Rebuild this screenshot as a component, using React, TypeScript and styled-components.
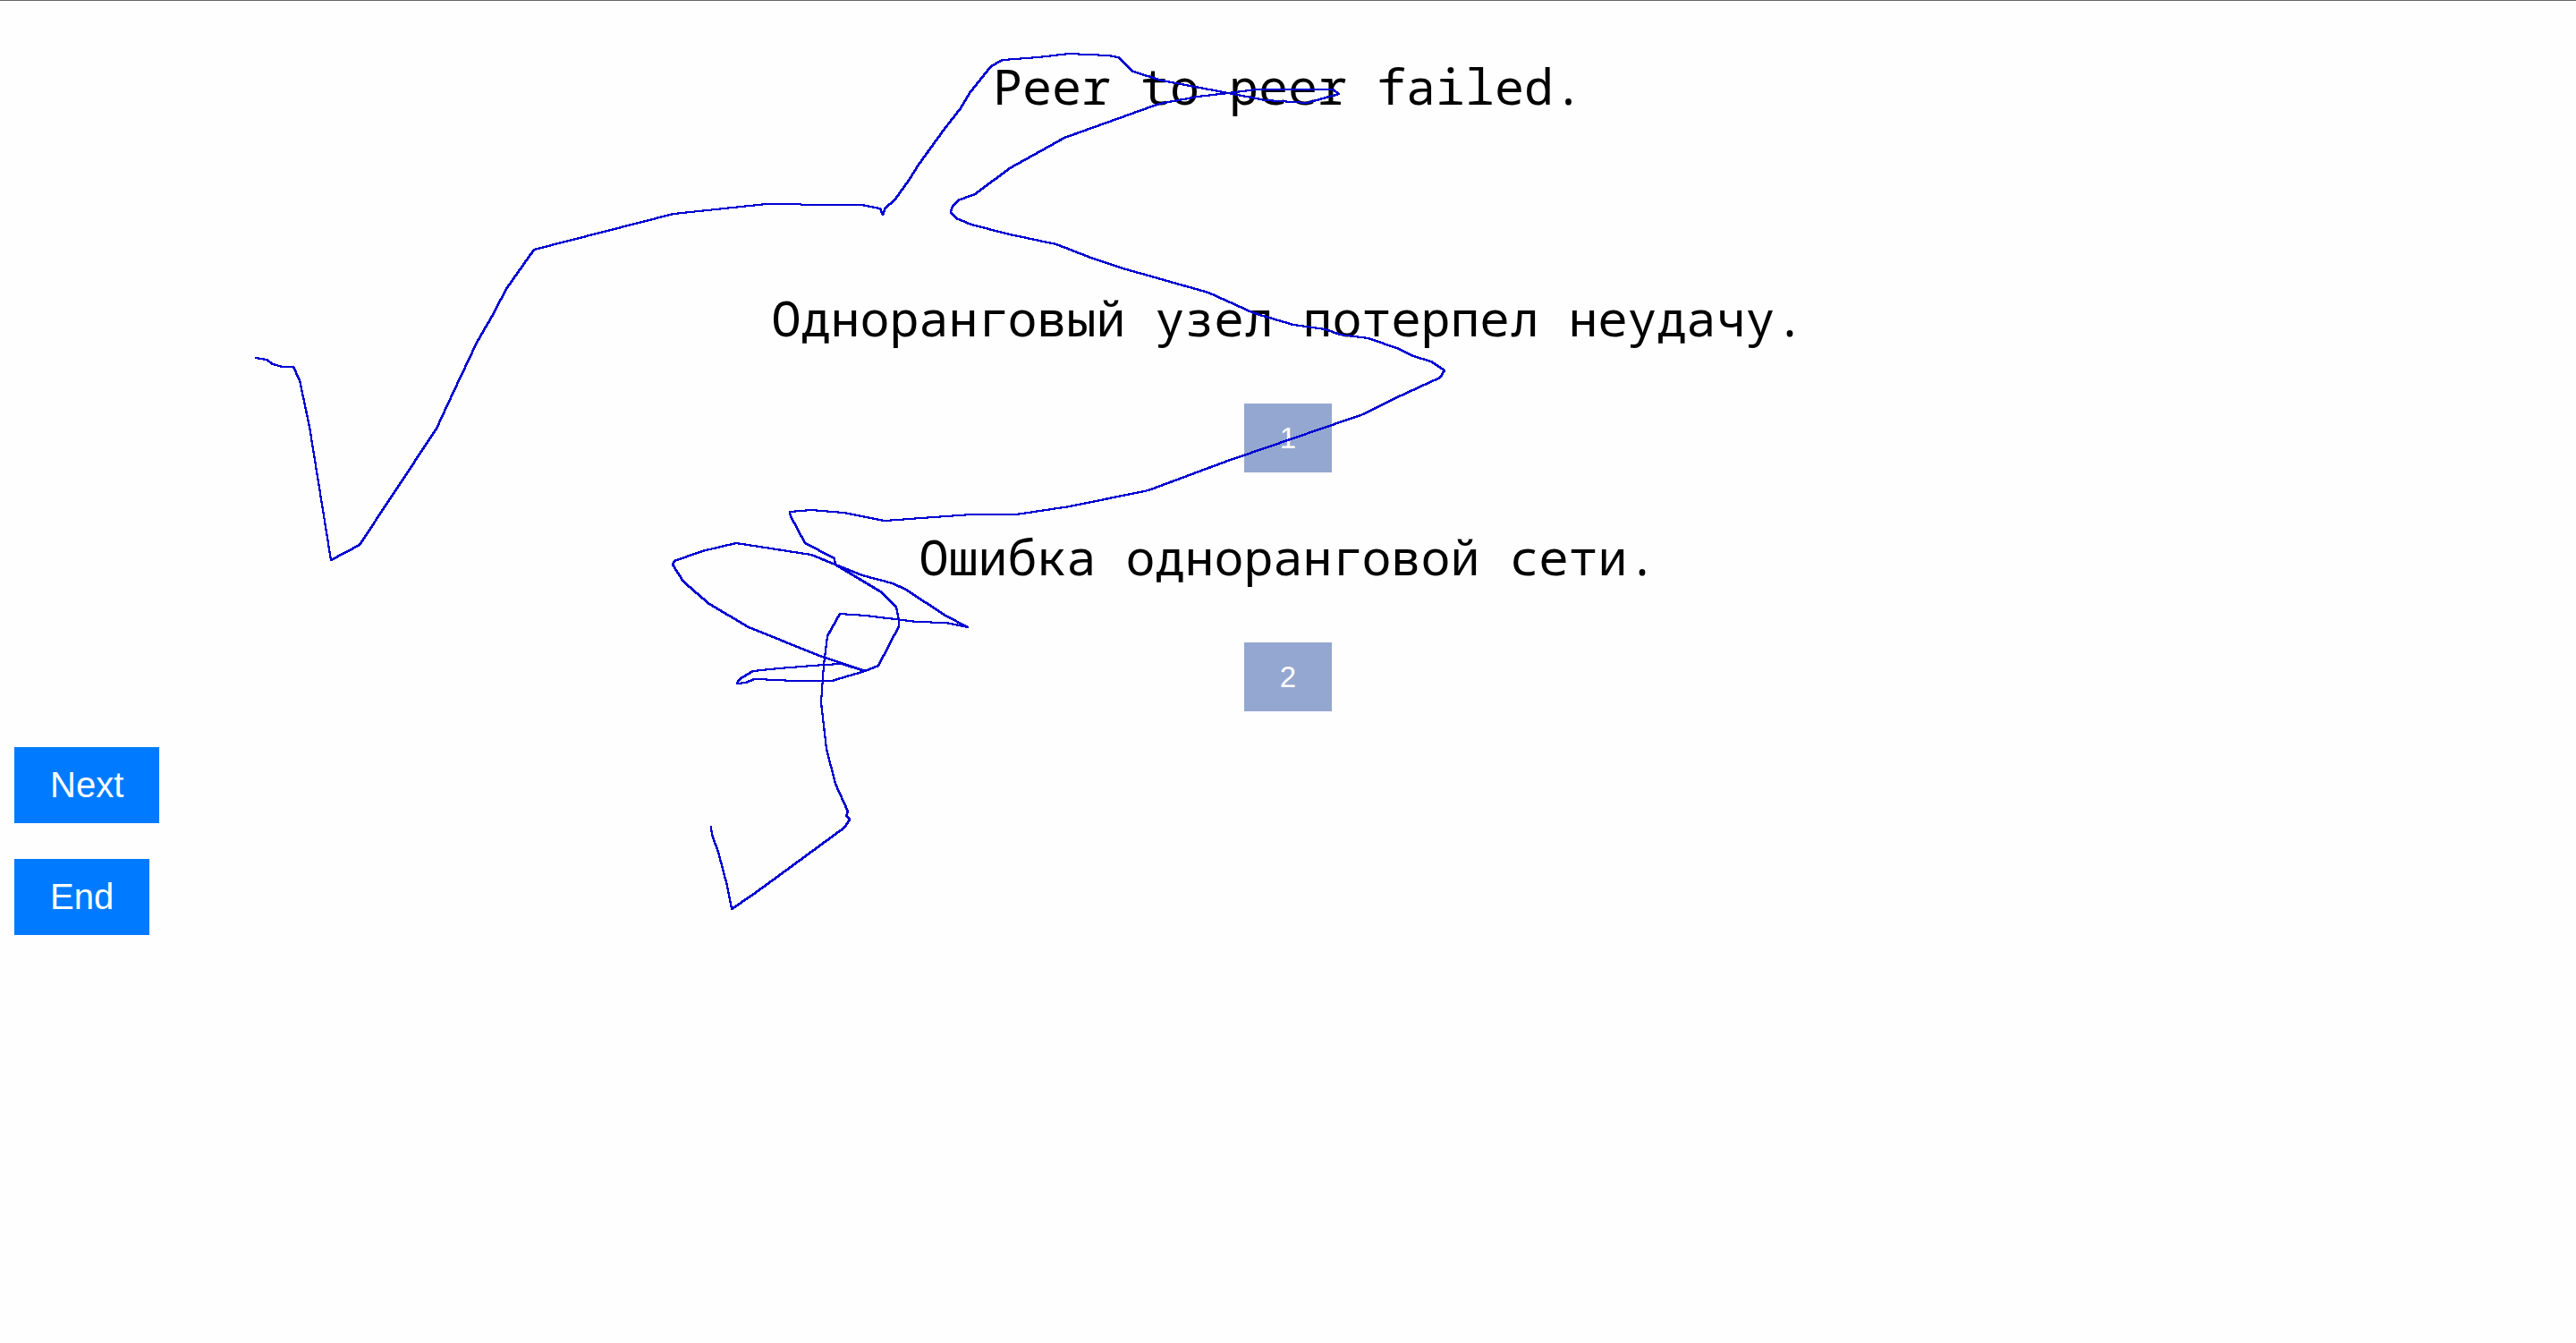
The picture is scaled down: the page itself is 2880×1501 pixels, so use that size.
import React from 'react';
import styled, { createGlobalStyle } from 'styled-components';

const GlobalStyle = createGlobalStyle`
  body {
    margin: 0;
    background: #fefefe;
    color: #000;
  }
`;

const Page = styled.main`
  position: relative;
  box-sizing: border-box;
  min-height: 100vh;
  padding: 57px 16px 40px;
  border-top: 1px solid #666;
  display: flex;
  flex-direction: column;
`;

const Phrase = styled.p`
  margin: 0;
  font-family: 'Noto Sans Mono', 'DejaVu Sans Mono', monospace;
  font-size: 55px;
  line-height: 76px;
  text-align: center;
`;

const Question = styled.header`
  margin-bottom: 183px;
`;

const Options = styled.ol`
  margin: 0 0 40px;
  padding: 0;
  list-style: none;
  display: flex;
  flex-direction: column;
  gap: 56px;
`;

const Option = styled.li`
  display: flex;
  flex-direction: column;
  align-items: center;
  gap: 58px;
`;

const Button = styled.button`
  border: 0;
  border-radius: 0;
  padding: 20px 40px;
  color: #fff;
  font-family: 'Liberation Sans', Arial, sans-serif;
  cursor: pointer;
`;

const ChoiceButton = styled(Button)`
  background: #94a7d0;
  font-size: 33px;
  line-height: 37px;
`;

const ActionButton = styled(Button)`
  background: #007bff;
  font-size: 40px;
  line-height: 45px;
`;

const Actions = styled.div`
  display: flex;
  flex-direction: column;
  align-items: flex-start;
  gap: 40px;
`;

const GazeLayer = styled.svg`
  position: absolute;
  top: -1px;
  left: 0;
  width: 100%;
  height: 100%;
  pointer-events: none;
`;

const GazeSegment = styled.line`
  stroke: #0000d2;
  stroke-linecap: round;
  shape-rendering: crispEdges;
`;

type Point = [number, number];

const gazePoints: Point[] = [
  '286,400 298,402 305,407 316,410 328,410 335,425 346,477 370,626 402,609 443,547 488,479',
  '507,438 533,383 552,350 566,323 597,279 753,239 857,228 933,229 963,229 984,233 987,240',
  '990,232 1000,224 1017,200 1027,184 1056,144 1074,121 1084,104 1108,74 1121,67 1161,64',
  '1195,60 1239,62 1250,64 1267,80 1299,90 1373,104 1415,112 1461,115 1497,105 1490,100',
  '1405,100 1373,104 1339,108 1296,116 1190,154 1129,188 1090,217 1071,224 1065,231 1063,237',
  '1069,244 1086,251 1129,262 1181,273 1217,287 1252,299 1351,327 1402,350 1446,363 1482,368',
  '1498,374 1530,378 1564,390 1580,398 1600,404 1615,414 1610,422 1560,445 1524,463 1370,516',
  '1284,548 1196,566 1136,575 1086,575 989,582 943,573 907,570 883,572 884,577 900,607 933,624',
  '934,631 984,661 1002,678 1005,693 1005,700 982,744 967,750 930,761 884,761 871,760 843,759',
  '834,763 824,764 827,759 842,750 871,747 921,743 941,742 967,750 914,732 837,701 793,675',
  '764,650 752,631 754,627 785,616 823,607 907,620 934,631 964,643 998,652 1013,659 1057,688',
  '1082,701 1057,696 1025,695 968,688 939,686 925,711 921,743 918,785 924,837 934,876 948,907',
  '946,912 950,916 944,925 843,999 818,1016 813,990 803,952 796,933 795,924',
]
  .join(' ')
  .split(' ')
  .map((pair) => pair.split(',').map(Number) as Point);

// A square 2px pen: diagonal strokes come out wider than straight ones.
const penWidth = ([x1, y1]: Point, [x2, y2]: Point) => {
  const dx = Math.abs(x2 - x1);
  const dy = Math.abs(y2 - y1);
  return (2 * (dx + dy)) / Math.hypot(dx, dy);
};

const options = [
  { id: 1, text: 'Одноранговый узел потерпел неудачу.' },
  { id: 2, text: 'Ошибка одноранговой сети.' },
];

export default function App() {
  return (
    <>
      <GlobalStyle />
      <Page>
        <Question>
          <Phrase>Peer to peer failed.</Phrase>
        </Question>
        <Options>
          {options.map(({ id, text }) => (
            <Option key={id}>
              <Phrase lang="ru">{text}</Phrase>
              <ChoiceButton type="button">{id}</ChoiceButton>
            </Option>
          ))}
        </Options>
        <Actions>
          <ActionButton type="button">Next</ActionButton>
          <ActionButton type="button">End</ActionButton>
        </Actions>
        <GazeLayer aria-hidden="true">
          {gazePoints.slice(1).map((to, i) => {
            const from = gazePoints[i];
            return (
              <GazeSegment
                key={i}
                x1={from[0]}
                y1={from[1]}
                x2={to[0]}
                y2={to[1]}
                strokeWidth={penWidth(from, to)}
              />
            );
          })}
        </GazeLayer>
      </Page>
    </>
  );
}
